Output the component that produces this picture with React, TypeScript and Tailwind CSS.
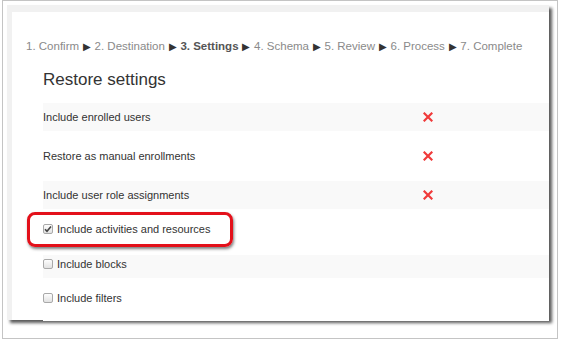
import React from "react";

const steps = [
  { label: "1. Confirm" },
  { label: "2. Destination" },
  { label: "3. Settings", current: true },
  { label: "4. Schema" },
  { label: "5. Review" },
  { label: "6. Process" },
  { label: "7. Complete" },
];

function RedX() {
  return (
    <svg width="10" height="10" viewBox="0 0 10 10">
      <path d="M1.5 1.5 L8.5 8.5 M8.5 1.5 L1.5 8.5" stroke="#f03a3a" strokeWidth="2.2" strokeLinecap="square" />
    </svg>
  );
}

function Box({ checked }: { checked?: boolean }) {
  return (
    <span className="w-[10px] h-[10px] mr-[4px] rounded-[2px] border border-[#a9a9a9] bg-gradient-to-b from-[#fdfdfd] to-[#e2e2e2] flex items-center justify-center">
      {checked && (
        <svg width="8" height="8" viewBox="0 0 8 8">
          <path d="M1 4.2 L3 6.3 L7 1.5" stroke="#444" strokeWidth="1.6" fill="none" />
        </svg>
      )}
    </span>
  );
}

type Row = { text: string; h: string; pt: string; gray?: boolean; x?: boolean; box?: boolean; checked?: boolean };

const rows: Row[] = [
  { text: "Include enrolled users", h: "h-[28px]", pt: "pt-[7px]", gray: true, x: true },
  { text: "Restore as manual enrollments", h: "h-[50px]", pt: "pt-[18px]", x: true },
  { text: "Include user role assignments", h: "h-[28px]", pt: "pt-[7px]", gray: true, x: true },
  { text: "Include activities and resources", h: "h-[46px]", pt: "pt-[13px]", box: true, checked: true },
  { text: "Include blocks", h: "h-[23px]", pt: "pt-[2px]", gray: true, box: true },
  { text: "Include filters", h: "h-[43px]", pt: "pt-[13px]", box: true },
];

export default function App() {
  return (
    <div className="relative w-[568px] h-[341px] bg-white overflow-hidden font-['Liberation_Sans',Arial,sans-serif]">
      <div className="ml-[2px] w-[556px] h-[339px] border border-[#c4c4c4]">
        <div className="ml-[4px] mt-[4px] w-[542px] h-[315px] bg-[#f1f1f1] pl-[5px] pt-[7px] shadow-[3px_3px_3px_rgba(0,0,0,0.65)]">
          <div className="w-full h-full bg-white">
            {/* Steps */}
            <div className="pt-[26px] pl-[14px] text-[11.5px] leading-[16px] text-[#8a8a8a] whitespace-nowrap">
              {steps.map((s, i) => (
                <span key={s.label}>
                  {i > 0 && <span className="text-[#333] text-[10px] mx-[3.75px]">&#9654;</span>}
                  <span className={s.current ? "font-bold text-[#555]" : ""}>{s.label}</span>
                </span>
              ))}
            </div>

            <h2 className="mt-[15px] pl-[31px] text-[17px] leading-[20px] text-[#333]">Restore settings</h2>

            {/* Settings rows */}
            <div className="mt-[13px] ml-[31px]">
              {rows.map((r) => (
                <div key={r.text} className={`${r.h} ${r.pt} ${r.gray ? "bg-[#f9f9f9]" : "bg-white"} flex items-start`}>
                  <div className="w-[380px] h-[14px] flex items-center text-[11px] leading-[14px] text-[#333]">
                    {r.box && <Box checked={r.checked} />}
                    {r.text}
                  </div>
                  {r.x && (
                    <div className="h-[14px] flex items-center">
                      <RedX />
                    </div>
                  )}
                </div>
              ))}
            </div>
          </div>
        </div>
      </div>

      {/* Highlight callout */}
      <div className="absolute left-[27px] top-[212px] w-[206px] h-[35px] rounded-[8px] border-[3px] border-[#e3101a] shadow-[1px_2px_3px_rgba(0,0,0,0.5)]" />
    </div>
  );
}
